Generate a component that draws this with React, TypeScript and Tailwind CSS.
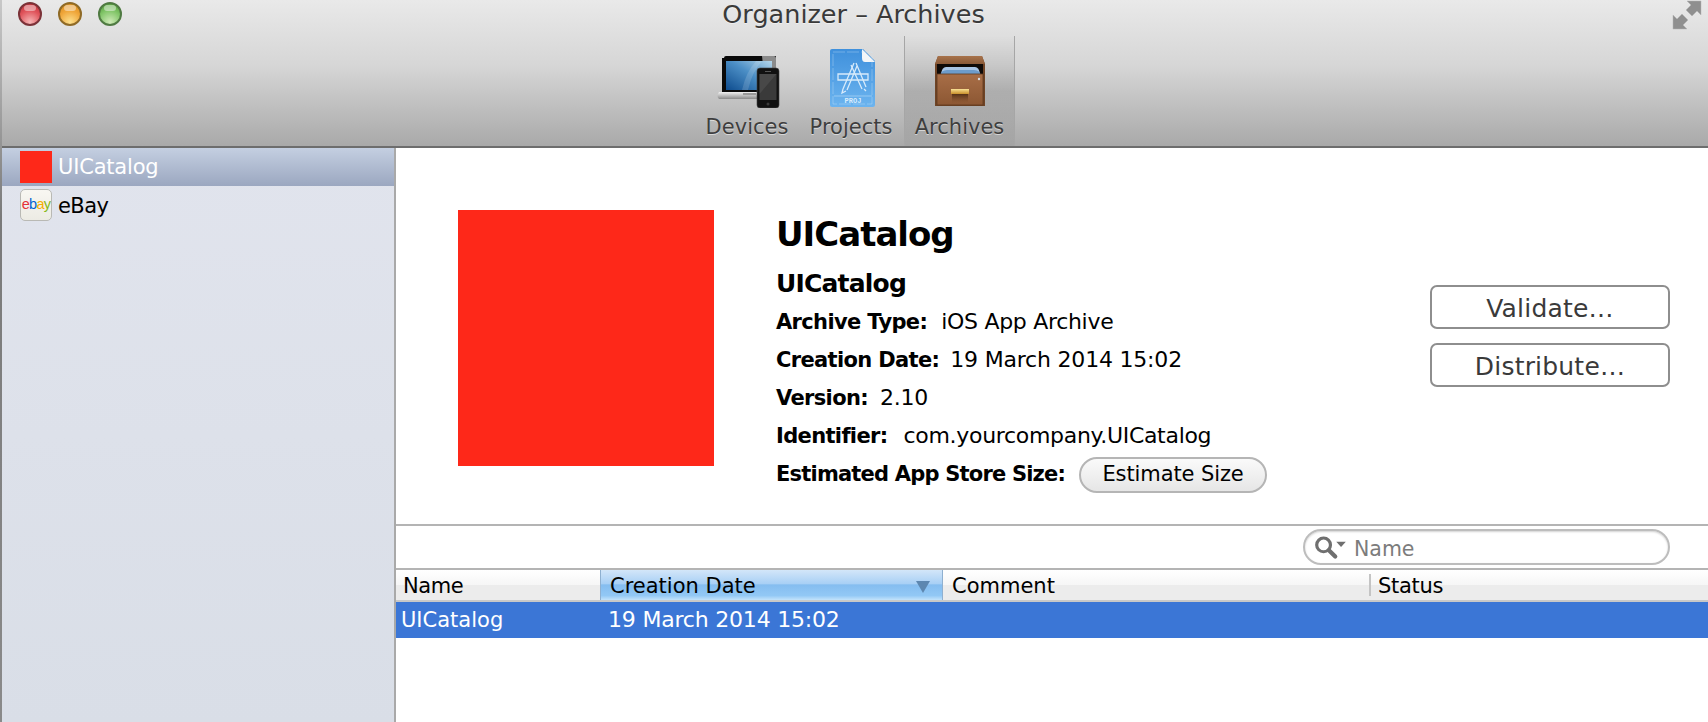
import React from "react";

const font = "font-['DejaVu_Sans',sans-serif]";

function Light({ from, mid, to, ring }: { from: string; mid: string; to: string; ring: string }) {
  return (
    <div
      className="relative w-6 h-6 rounded-full border-2 overflow-hidden"
      style={{ borderColor: ring, background: `radial-gradient(circle at 50% 90%, ${to} 0%, ${mid} 55%, ${from} 100%)` }}
    >
      <div className="absolute left-[4px] top-[1px] w-3 h-[6px] rounded-full bg-white/45" />
    </div>
  );
}

function DevicesIcon() {
  return (
    <svg width="66" height="56" viewBox="0 0 66 56">
      <defs>
        <linearGradient id="scr" x1="0" y1="1" x2="1" y2="0">
          <stop offset="0" stopColor="#0e4c8e" />
          <stop offset="0.55" stopColor="#4c8fc6" />
          <stop offset="1" stopColor="#b5d6ea" />
        </linearGradient>
        <linearGradient id="base" x1="0" y1="0" x2="0" y2="1">
          <stop offset="0" stopColor="#f2f2f2" />
          <stop offset="1" stopColor="#8a8a8a" />
        </linearGradient>
      </defs>
      <path d="M8 6 a2 2 0 0 1 2-2 H60 V40 H6 V6Z" fill="#0a0a0a" />
      <path d="M46 4 H58 a2 2 0 0 1 2 2 V40 H50Z" fill="#8b8b8b" />
      <rect x="10" y="9" width="46" height="29" fill="url(#scr)" />
      <path d="M26 38 Q30 20 40 9 H46 Q36 20 32 38Z" fill="#fff" opacity="0.14" />
      <path d="M3 40 H46 V47 H3 Q0 44 3 40Z" fill="url(#base)" />
      <rect x="27" y="41" width="13" height="2" fill="#9a9a9a" />
      <rect x="41" y="16" width="22" height="40" rx="3" fill="#111" stroke="#444" strokeWidth="0.6" />
      <rect x="43.500" y="22" width="17" height="26" fill="#3a3a3a" />
      <path d="M43.500 22 H60.500 L43.500 42Z" fill="#555" opacity="0.5" />
      <circle cx="52" cy="52" r="1.500" fill="#3a3a3a" />
      <rect x="49" y="19" width="6" height="1" fill="#555" />
    </svg>
  );
}

function ProjectIcon() {
  return (
    <svg width="46" height="60" viewBox="0 0 46 60">
      <defs>
        <linearGradient id="blue" x1="0" y1="0" x2="0" y2="1">
          <stop offset="0" stopColor="#3f90dc" />
          <stop offset="1" stopColor="#6cb4ef" />
        </linearGradient>
      </defs>
      <path d="M2 1 H33 L45 13 V57 a2 2 0 0 1-2 2 H2 a2 2 0 0 1-2-2 V3 a2 2 0 0 1 2-2Z" fill="url(#blue)" />
      <path d="M32 1 L45 14 H35 Q32 14 32 10Z" fill="#f4f6f8" />
      <rect x="3" y="4" width="39" height="52" fill="none" stroke="#cfe6fa" strokeWidth="0.5" opacity="0.7" strokeDasharray="12 2" />
      <g fill="none" stroke="#e6f3fd" strokeWidth="1.300" opacity="0.9">
        <path d="M13 41 L24 15 M17 42 L27 18" />
        <path d="M21 17 L32 41 M26 15 L36 39" />
        <path d="M8 26 H38 V32 H8Z" />
        <path d="M13 41 L12 45 L16 43 M34 41 L36 43" />
      </g>
      <path d="M4 48 H42" stroke="#cfe6fa" strokeWidth="0.5" />
      <text x="23" y="55" textAnchor="middle" fontSize="7" fontWeight="700" fill="#d7ecfc" fontFamily="Liberation Mono, monospace">PROJ</text>
    </svg>
  );
}

function ArchiveIcon() {
  return (
    <svg width="50" height="52" viewBox="0 0 50 52">
      <defs>
        <linearGradient id="lid" x1="0" y1="0" x2="0" y2="1">
          <stop offset="0" stopColor="#a8734c" />
          <stop offset="1" stopColor="#8a5a38" />
        </linearGradient>
        <linearGradient id="front" x1="0" y1="0" x2="0" y2="1">
          <stop offset="0" stopColor="#a86e47" />
          <stop offset="1" stopColor="#8c5733" />
        </linearGradient>
        <linearGradient id="handle" x1="0" y1="0" x2="0" y2="1">
          <stop offset="0" stopColor="#f0cf7a" />
          <stop offset="1" stopColor="#c98f2c" />
        </linearGradient>
        <linearGradient id="shade" x1="0" y1="0" x2="0" y2="1">
          <stop offset="0" stopColor="#4e2b12" stopOpacity="0.9" />
          <stop offset="1" stopColor="#7a4a28" stopOpacity="0" />
        </linearGradient>
      </defs>
      <path d="M3 0 H47 L50 8 V50 H0 V8Z" fill="#6f4426" />
      <path d="M3 0 H47 L50 8 H0Z" fill="url(#lid)" />
      <rect x="2" y="8" width="46" height="12" fill="#0f0a07" />
      <path d="M6 18 Q7 11 11 11 H40 Q44 11 45 18Z" fill="#a9c5e4" />
      <path d="M5 20 Q6 14 12 14 H39 Q45 14 46 20Z" fill="#6d9ccb" />
      <rect x="2" y="18" width="46" height="31" fill="url(#front)" stroke="#5f3a1f" strokeWidth="0.8" />
      <circle cx="44" cy="23" r="1.200" fill="#d9dde0" />
      <rect x="16" y="33" width="18" height="1.500" fill="#f4d98c" />
      <rect x="16" y="34" width="18" height="4" fill="url(#handle)" />
      <rect x="17" y="38" width="16" height="9" fill="url(#shade)" />
    </svg>
  );
}

function EbayIcon() {
  return (
    <div className="w-8 h-8 rounded-[5px] border border-[#b9b9b4] bg-[linear-gradient(to_bottom,#f8f7f2,#ecebe4)] flex items-center justify-center overflow-hidden">
      <span className="font-['Liberation_Sans',sans-serif] text-[14.500px] tracking-[-0.7px] leading-none -mt-[2px]">
        <span className="text-[#e53238]">e</span>
        <span className="text-[#0064d2]">b</span>
        <span className="text-[#f5af02]">a</span>
        <span className="text-[#86b817]">y</span>
      </span>
    </div>
  );
}

function FullScreenIcon() {
  return (
    <svg width="30" height="30" viewBox="0 0 30 30">
      <path d="M15 1 H29 V15 L25 11 L20 16 L14 10 L19 5Z" fill="#8f8f8f" stroke="#b5b5b5" strokeWidth="0.5" />
      <path d="M1 15 L5 19 L10 14 L16 20 L11 25 L15 29 H1Z" fill="#8f8f8f" stroke="#b5b5b5" strokeWidth="0.5" />
    </svg>
  );
}

function ToolItem({ label, icon, width, active, iconPad, labelPad }: { label: string; icon: React.ReactNode; width: string; active?: boolean; iconPad?: string; labelPad?: string }) {
  return (
    <div
      className={`${width} h-full flex flex-col items-center ${
        active
          ? "border-x border-[#a6a6a6] bg-[linear-gradient(to_bottom,rgba(0,0,0,0),rgba(0,0,0,0.13)_50%,rgba(0,0,0,0.03))]"
          : ""
      }`}
    >
      <div className={`h-[77px] flex items-end pb-[5px] ${iconPad ?? ""}`}>{icon}</div>
      <span className={`text-[21px] leading-[28px] text-[#3e3e3e] [text-shadow:0_1px_0_rgba(255,255,255,0.55)] ${labelPad ?? ""}`}>{label}</span>
    </div>
  );
}

function InfoLine({ label, value, gap, valueTracking }: { label: string; value: string; gap: string; valueTracking: string }) {
  return (
    <div className={`h-[38px] leading-[38px] flex items-baseline ${gap}`}>
      <span className="font-bold text-[21px] tracking-[-0.65px]">{label}</span>
      <span className={`text-[22px] ${valueTracking}`}>{value}</span>
    </div>
  );
}

export default function App() {
  return (
    <div className={`${font} w-[1708px] h-[722px] overflow-hidden flex bg-white text-black`}>
      <div className="w-[2px] h-full bg-[linear-gradient(to_bottom,#c8c8c8,#7a7a7a_30%,#8a8a8a)]" />
      <div className="flex-1 flex flex-col min-w-0">
        {/* Toolbar */}
        <div className="h-[148px] border-b-2 border-[#6d6d6d] bg-[linear-gradient(to_bottom,#e9e9e9,#d6d6d6_45%,#a9a9a9)] flex flex-col">
          <div className="h-[36px] grid grid-cols-[1fr_auto_1fr] items-start">
            <div className="flex gap-4 pl-[16px] pt-[2px]">
              <Light from="#c02a34" mid="#e0555c" to="#f6b6b6" ring="#7b3238" />
              <Light from="#d88a18" mid="#efa63a" to="#fce08e" ring="#8f6a26" />
              <Light from="#4c9a32" mid="#83c66a" to="#cfeab8" ring="#4f7a42" />
            </div>
            <div className="text-[25.500px] leading-[28px] pr-[3px] text-[#3a3a3a] [text-shadow:0_1px_0_rgba(255,255,255,0.5)]">Organizer – Archives</div>
            <div className="flex justify-end pr-[6px]">
              <FullScreenIcon />
            </div>
          </div>
          <div className="flex-1 flex justify-center pl-[5px] min-h-0">
            <ToolItem label="Devices" icon={<DevicesIcon />} width="w-[98px]" labelPad="pr-[4px]" />
            <ToolItem label="Projects" icon={<ProjectIcon />} width="w-[106px]" iconPad="pl-[4px]" />
            <ToolItem label="Archives" icon={<ArchiveIcon />} width="w-[111px]" active />
          </div>
        </div>

        <div className="flex-1 flex min-h-0">
          {/* Sidebar */}
          <div className="w-[394px] border-r-2 border-[#a9a9a9] bg-[linear-gradient(to_bottom,#e1e4ed,#d9dee7)] text-[21px] tracking-[-0.2px]">
            <div className="h-[38px] flex items-center pl-[18px] gap-[6px] text-white bg-[linear-gradient(to_bottom,#c4cfe1,#9ba7c0)]">
              <div className="w-8 h-8 bg-[#fe2819]" />
              <span className="pt-[2px]">UICatalog</span>
            </div>
            <div className="h-[38px] flex items-center pl-[18px] gap-[6px]">
              <EbayIcon />
              <span className="tracking-[-0.6px] pt-[3px]">eBay</span>
            </div>
          </div>

          {/* Main */}
          <div className="flex-1 flex flex-col min-w-0">
            <div className="h-[376px] flex pt-[62px] pl-[62px]">
              <div className="w-64 h-64 bg-[#fe2819]" />
              <div className="ml-[62px] -mt-[1px] flex-1">
                <div className="text-[34px] tracking-[-1px] font-bold leading-[46px] pt-[2px]">UICatalog</div>
                <div className="text-[25px] tracking-[-0.8px] font-bold leading-[38px] mt-[8px]">UICatalog</div>
                <InfoLine label="Archive Type:" value="iOS App Archive" gap="gap-[14px]" valueTracking="tracking-[-0.3px]" />
                <InfoLine label="Creation Date:" value="19 March 2014 15:02" gap="gap-[11px]" valueTracking="tracking-[-0.2px]" />
                <InfoLine label="Version:" value="2.10" gap="gap-[12px]" valueTracking="tracking-[-0.2px]" />
                <InfoLine label="Identifier:" value="com.yourcompany.UICatalog" gap="gap-[16px]" valueTracking="tracking-[-0.3px]" />
                <div className="h-[38px] flex items-center gap-[14px]">
                  <span className="font-bold text-[21px] tracking-[-0.8px] pt-[2px]">Estimated App Store Size:</span>
                  <button className="w-[188px] h-[36px] mt-[2px] rounded-full border-2 border-[#b5b5b5] bg-[linear-gradient(to_bottom,#fafafa,#e6e6e6)] text-[21px] tracking-[-0.1px]">Estimate Size</button>
                </div>
              </div>
              <div className="w-[240px] mr-[38px] mt-[75px] flex flex-col gap-[14px] text-[25px] tracking-[0.2px] text-[#3a3a3a]">
                <button className="h-[44px] pt-[3px] rounded-[7px] border-2 border-[#8e8e8e] bg-white">Validate…</button>
                <button className="h-[44px] pt-[3px] rounded-[7px] border-2 border-[#8e8e8e] bg-white">Distribute…</button>
              </div>
            </div>

            <div className="h-[46px] border-y-2 border-[#b4b4b4] flex items-center justify-end pr-[38px]">
              <div className="w-[367px] h-[36px] rounded-full border-2 border-[#bdbdbd] shadow-[inset_0_1px_2px_rgba(0,0,0,0.18)] flex items-center pl-[8px]">
                <svg width="36" height="26" viewBox="0 0 34 24" className="shrink-0">
                  <circle cx="10" cy="10" r="6.500" fill="none" stroke="#6f6f6f" strokeWidth="3" />
                  <path d="M15 15 L21 21" stroke="#6f6f6f" strokeWidth="4" strokeLinecap="round" />
                  <path d="M22 7 H31 L26.500 12Z" fill="#6f6f6f" />
                </svg>
                <span className="text-[20.500px] text-[#7c7c7c] ml-[5px] pt-[4px]">Name</span>
              </div>
            </div>

            <div className="h-[32px] border-b-2 border-[#c8c8c8] flex text-[21px] bg-[linear-gradient(to_bottom,#ffffff,#f6f6f6_50%,#ececec_50%,#ececec)]">
              <div className="w-[204px] h-full flex items-center pl-[7px] pt-[3px] tracking-[-0.4px]">Name</div>
              <div className="w-[343px] h-full border-x border-[#8fb0d0] flex items-center justify-between pl-[9px] pr-[12px] pt-[3px] bg-[linear-gradient(to_bottom,#d3e6f9,#a9d0f5_45%,#85bdf0_50%,#92c8f5_85%,#c3e3fb)]">
                <span>Creation Date</span>
                <svg width="14" height="12" viewBox="0 0 14 12"><path d="M0 0 H14 L7 12Z" fill="#5d87b0" /></svg>
              </div>
              <div className="w-[426px] h-full flex items-center pl-[9px] pt-[3px]">Comment</div>
              <div className="flex-1 h-full flex items-center">
                <div className="w-[2px] h-[22px] bg-[#c4c4c4] mr-[7px]" />
                <span className="tracking-[-0.3px] pt-[3px]">Status</span>
              </div>
            </div>

            <div className="h-[36px] bg-[#3b76d6] text-white flex items-baseline leading-[36px]">
              <span className="w-[212px] pl-[5px] text-[21px]">UICatalog</span>
              <span className="text-[22px] tracking-[-0.2px]">19 March 2014 15:02</span>
            </div>
          </div>
        </div>
      </div>
    </div>
  );
}
